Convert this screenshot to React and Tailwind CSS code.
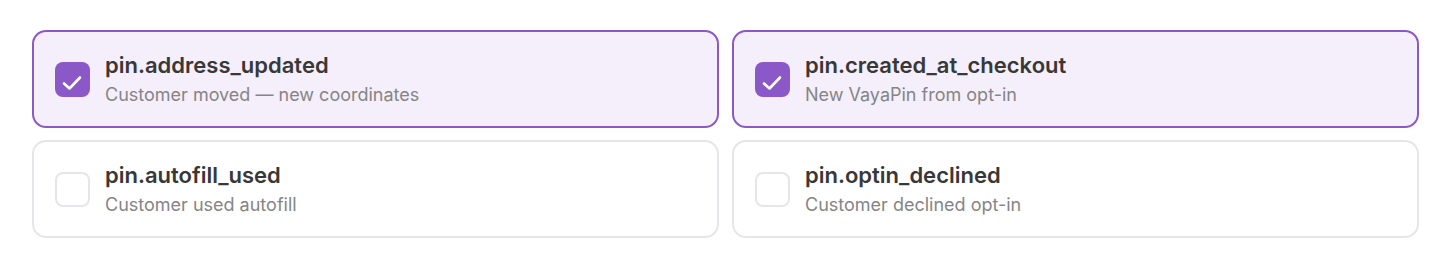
const events = [
  { name: 'pin.address_updated', desc: 'Customer moved — new coordinates', checked: true },
  { name: 'pin.created_at_checkout', desc: 'New VayaPin from opt-in', checked: true },
  { name: 'pin.autofill_used', desc: 'Customer used autofill', checked: false },
  { name: 'pin.optin_declined', desc: 'Customer declined opt-in', checked: false },
]

function EventCard({ event }) {
  const { name, desc, checked } = event
  return (
    <label
      className={`flex items-center gap-[15px] h-[98px] px-[21px] rounded-[14px] border-2 cursor-pointer ${
        checked ? 'border-[#8a58c7] bg-[#f5effb]' : 'border-[#e6e6ea] bg-white'
      }`}
    >
      <span
        className={`flex items-center justify-center w-[35px] h-[35px] rounded-[8px] shrink-0 ${
          checked ? 'bg-[#8a58c7]' : 'border-2 border-[#e6e6ea] bg-white'
        }`}
      >
        {checked && (
          <svg width="35" height="35" viewBox="0 0 35 35" fill="none">
            <path d="M9 21.5 L14.5 26.5 L25 15.5" stroke="white" strokeWidth="2.6" strokeLinecap="round" strokeLinejoin="round" />
          </svg>
        )}
      </span>
      <span className="flex flex-col">
        <span className="text-[22px] leading-[26px] font-semibold text-[#383838]">{name}</span>
        <span className="text-[18px] leading-[22px] mt-[6px] text-[#858585]">{desc}</span>
      </span>
    </label>
  )
}

export default function App() {
  return (
    <div className="w-[1450px] h-[262px] bg-white pl-8 pr-[31px] pt-[30px] font-['Inter','Noto_Sans',sans-serif]">
      <div className="grid grid-cols-2 gap-x-[13px] gap-y-3">
        {events.map((e) => (
          <EventCard key={e.name} event={e} />
        ))}
      </div>
    </div>
  )
}
